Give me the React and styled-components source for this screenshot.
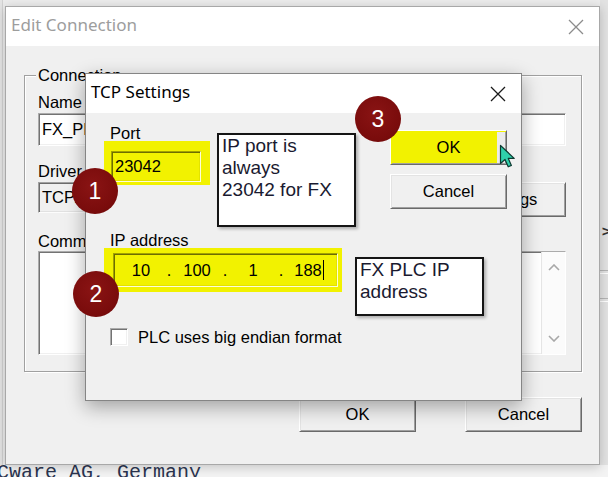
import React from "react";
import styled, { createGlobalStyle } from "styled-components";

const GlobalStyle = createGlobalStyle`
    html, body {
        margin: 0;
        padding: 0;
    }
    body {
        width: 608px;
        height: 477px;
        overflow: hidden;
        background: #ececec;
        font-family: "Liberation Sans", Arial, sans-serif;
    }
`

const Desktop = styled.div`
    position: relative;
    width: 608px;
    height: 477px;
    overflow: hidden;
`

/* ---------- the application behind the dialogs ---------- */

const BackApp = styled.div`
    display: flex;
    flex-direction: column;
    height: 100%;
    background: #ececec;
`

const BackTop = styled.div`
    flex: 1;
    display: grid;
    grid-template-columns: 5px 1fr 8px;
`

const BackLeft = styled.div`
    border-right: 1px solid #d2d2d2;
    margin-right: 2px;
    background: #e4e4e4;
`

const BackSide = styled.div`
    display: flex;
    flex-direction: column;
    padding-top: 222px;
    background: #e2e2e2;
`

const BackArrow = styled.div`
    font-family: "DejaVu Sans", sans-serif;
    font-size: 14px;
    font-weight: bold;
    line-height: 18px;
    color: #333;
    padding-left: 1px;
`

const BackRule = styled.div`
    height: 2px;
    margin-top: ${p => p.$gap}px;
    border-top: 1px solid #b4b4b4;
    border-bottom: 1px solid #fff;
`

const BackFooter = styled.div`
    height: 12px;
    overflow: hidden;
    background: #f3f3f3;
    font-family: "Liberation Mono", "Courier New", monospace;
    font-size: 20px;
    line-height: 15px;
    color: #2b3550;
    white-space: pre;
    text-indent: -3px;
`

/* ---------- generic window parts ---------- */

const Window = styled.div`
    position: absolute;
    left: ${p => p.$x}px;
    top: ${p => p.$y}px;
    width: ${p => p.$w}px;
    height: ${p => p.$h}px;
    box-sizing: border-box;
    display: flex;
    flex-direction: column;
    background: #f0f0f0;
    border: 1px solid ${p => (p.$active ? "#858585" : "#a8a8a8")};
    box-shadow: ${p => (p.$active
        ? "0 6px 18px rgba(0, 0, 0, 0.33)"
        : "0 2px 10px rgba(0, 0, 0, 0.2)")};
`

const TitleBar = styled.div`
    flex: none;
    height: 39px;
    display: flex;
    align-items: center;
    background: #fff;
`

const TitleText = styled.div`
    flex: 1;
    padding: 0 0 4px 5px;
    font-family: "Noto Sans", "Open Sans", sans-serif;
    font-size: 17px;
    color: ${p => (p.$active ? "#000" : "#9d9d9d")};
`

const CloseButton = styled.div`
    width: 46px;
    height: 100%;
    display: flex;
    align-items: center;
    justify-content: center;
`

const CloseIcon = ({ color }) => (
    <svg width="16" height="16" viewBox="0 0 16 16">
        <path d="M1 1 L15 15 M15 1 L1 15" stroke={color} strokeWidth="1.3" fill="none"/>
    </svg>
)

const FieldLabel = styled.div`
    height: 15px;
    line-height: 15px;
    font-size: 16.5px;
    color: #000;
    padding-left: ${p => p.$indent || 0}px;
    margin-top: ${p => p.$mt || 0}px;
    white-space: nowrap;
`

const Sunken = styled.div`
    box-sizing: border-box;
    width: ${p => (p.$w ? `${p.$w}px` : "auto")};
    height: ${p => p.$h}px;
    margin-top: ${p => p.$mt || 0}px;
    flex: ${p => (p.$grow ? 1 : "none")};
    display: flex;
    align-items: center;
    padding-left: 3px;
    background: ${p => p.$bg || "transparent"};
    border: 1px solid;
    border-color: rgba(0, 0, 0, 0.33) rgba(255, 255, 255, 0.85) rgba(255, 255, 255, 0.85) rgba(0, 0, 0, 0.33);
    box-shadow: inset 1px 1px 0 rgba(0, 0, 0, 0.55), inset -1px -1px 0 rgba(0, 0, 0, 0.06);
    font-size: 16.5px;
    color: #000;
    white-space: nowrap;
    overflow: hidden;
`

const Button = styled.div`
    box-sizing: border-box;
    width: 117px;
    height: 35px;
    flex: none;
    display: flex;
    align-items: center;
    justify-content: center;
    background: ${p => (p.$marked
        ? "linear-gradient(90deg, #f2f200 0 92%, #ebebeb 92%)"
        : "#f0f0f0")};
    border: 1px solid;
    border-color: #fff #6a6a6a #6a6a6a #fff;
    box-shadow: inset 1px 1px 0 ${p => (p.$marked ? "#f2f200" : "#e3e3e3")}, inset -1px -1px 0 #a0a0a0;
    font-size: 16.5px;
    color: #000;
`

/* ---------- Edit Connection ---------- */

const EditBody = styled.div`
    flex: 1;
    display: flex;
    flex-direction: column;
    padding: 29px 17px 0 18px;
`

const GroupBox = styled.div`
    height: 297px;
    box-sizing: border-box;
    display: flex;
    flex-direction: column;
    padding: 0 15px 16px 13px;
    border: 1px solid #a0a0a0;
    box-shadow: inset 1px 1px 0 #fff, 1px 1px 0 #fff;
`

const GroupLabel = styled.div`
    align-self: flex-start;
    margin: -10px 0 0 -2px;
    padding: 0 2px;
    height: 19px;
    line-height: 19px;
    font-size: 16.5px;
    background: #f0f0f0;
`

const DriverRow = styled.div`
    display: flex;
    align-items: flex-start;
    gap: 14px;
    margin-top: 3px;
`

const CommentBox = styled(Sunken)`
    align-items: stretch;
    padding-left: 0;
    justify-content: flex-end;
`

const ScrollBar = styled.div`
    width: 23px;
    display: flex;
    flex-direction: column;
    justify-content: space-between;
    align-items: center;
    padding: 12px 0;
    border-left: 1px solid #e6e6e6;
    background: #fbfbfb;
`

const Chevron = ({ down }) => (
    <svg width="12" height="7" viewBox="0 0 12 7">
        <path d={down ? "M1 1 L6 6 L11 1" : "M1 6 L6 1 L11 6"} stroke="#a8a8a8" strokeWidth="1.6" fill="none"/>
    </svg>
)

const DialogFooter = styled.div`
    display: flex;
    justify-content: flex-end;
    gap: 49px;
    padding-top: 25px;
`

/* ---------- TCP Settings ---------- */

const TcpBody = styled.div`
    flex: 1;
    display: flex;
    flex-direction: column;
    padding-left: 18px;
`

const SettingsRow = styled.div`
    display: flex;
    align-items: flex-start;
    height: ${p => p.$h}px;
    margin-top: ${p => p.$mt || 0}px;
`

const FieldGroup = styled.div`
    width: ${p => p.$w}px;
    margin-top: ${p => p.$mt || 0}px;
    display: flex;
    flex-direction: column;
`

const Highlight = styled.div`
    box-sizing: border-box;
    height: 44px;
    padding: ${p => p.$pad};
    background: #f2f200;
`

const Note = styled.div`
    box-sizing: border-box;
    width: ${p => p.$w}px;
    height: ${p => p.$h}px;
    margin: ${p => p.$mt}px 0 0 ${p => p.$ml}px;
    padding: 0 3px;
    background: #fff;
    border: 2px solid #151515;
    box-shadow: 2px 2px 3px rgba(0, 0, 0, 0.28);
    font-size: 19px;
    line-height: 22px;
    color: #1a1a30;
`

const ButtonColumn = styled.div`
    display: flex;
    flex-direction: column;
    gap: 9px;
    margin: 17px 0 0 34px;
`

const IpField = styled(Sunken)`
    padding-left: 6px;
`

const IpPart = styled.span`
    width: 42px;
    text-align: center;
`

const IpDot = styled.span`
    width: 14px;
    text-align: center;
`

const Caret = styled.span`
    display: inline-block;
    width: 1px;
    height: 20px;
    margin-left: 1px;
    vertical-align: -4px;
    background: #000;
`

const CheckRow = styled.div`
    display: flex;
    align-items: center;
    gap: 10px;
    margin: 12px 0 0 6px;
    height: 18px;
    font-size: 16.5px;
`

const CheckBox = styled(Sunken)`
    width: 18px;
    height: 18px;
    background: #fff;
`

/* ---------- annotations ---------- */

const Badge = styled.div`
    position: absolute;
    left: ${p => p.$cx - 23}px;
    top: ${p => p.$cy - 23}px;
    width: 46px;
    height: 46px;
    border-radius: 50%;
    display: flex;
    align-items: center;
    justify-content: center;
    background: radial-gradient(circle at 45% 40%, #8a1414 0%, #7a0c0c 65%, #6a0707 100%);
    color: #fff;
    font-size: 23px;
`

const Pointer = styled.svg`
    position: absolute;
    left: 499px;
    top: 144px;
`

const App = () => (
    <Desktop>
        <GlobalStyle/>
        <BackApp>
            <BackTop>
                <BackLeft/>
                <div/>
                <BackSide>
                    <BackArrow>&gt;</BackArrow>
                    <BackRule $gap={30}/>
                    <BackRule $gap={24}/>
                </BackSide>
            </BackTop>
            <BackFooter>Cware AG, Germany</BackFooter>
        </BackApp>

        <Window $x={5} $y={6} $w={595} $h={459}>
            <TitleBar>
                <TitleText>Edit Connection</TitleText>
                <CloseButton><CloseIcon color="#8c8c8c"/></CloseButton>
            </TitleBar>
            <EditBody>
                <GroupBox>
                    <GroupLabel>Connection</GroupLabel>
                    <FieldLabel $mt={10}>Name</FieldLabel>
                    <Sunken $h={33} $mt={3} $bg="#fff">FX_PLC</Sunken>
                    <FieldLabel $mt={18}>Driver</FieldLabel>
                    <DriverRow>
                        <Sunken $h={31} $grow>TCP/IP</Sunken>
                        <Button>Settings</Button>
                    </DriverRow>
                    <FieldLabel $mt={17}>Comment</FieldLabel>
                    <CommentBox $h={104} $mt={2} $bg="#fff">
                        <ScrollBar>
                            <Chevron/>
                            <Chevron down/>
                        </ScrollBar>
                    </CommentBox>
                </GroupBox>
                <DialogFooter>
                    <Button>OK</Button>
                    <Button>Cancel</Button>
                </DialogFooter>
            </EditBody>
        </Window>

        <Window $x={85} $y={73} $w={437} $h={328} $active>
            <TitleBar>
                <TitleText $active>TCP Settings</TitleText>
                <CloseButton><CloseIcon color="#1a1a1a"/></CloseButton>
            </TitleBar>
            <TcpBody>
                <SettingsRow $h={114}>
                    <FieldGroup $w={106} $mt={13}>
                        <FieldLabel $indent={6}>Port</FieldLabel>
                        <Highlight $pad="10px 0 0 7px">
                            <Sunken $w={90} $h={31}>23042</Sunken>
                        </Highlight>
                    </FieldGroup>
                    <Note $w={139} $h={94} $mt={20} $ml={7}>
                        IP port is<br/>always<br/>23042 for FX
                    </Note>
                    <ButtonColumn>
                        <Button $marked>OK</Button>
                        <Button>Cancel</Button>
                    </ButtonColumn>
                </SettingsRow>
                <SettingsRow $h={83} $mt={6}>
                    <FieldGroup $w={238}>
                        <FieldLabel $indent={6}>IP address</FieldLabel>
                        <Highlight $pad="5px 0 0 9px">
                            <IpField $w={225} $h={34}>
                                <IpPart>10</IpPart>
                                <IpDot>.</IpDot>
                                <IpPart>100</IpPart>
                                <IpDot>.</IpDot>
                                <IpPart>1</IpPart>
                                <IpDot>.</IpDot>
                                <IpPart>188<Caret/></IpPart>
                            </IpField>
                        </Highlight>
                    </FieldGroup>
                    <Note $w={129} $h={59} $mt={24} $ml={13}>
                        FX PLC IP<br/>address
                    </Note>
                </SettingsRow>
                <CheckRow>
                    <CheckBox/>
                    PLC uses big endian format
                </CheckRow>
            </TcpBody>
        </Window>

        <Badge $cx={95} $cy={191}>1</Badge>
        <Badge $cx={96} $cy={294}>2</Badge>
        <Badge $cx={378} $cy={119}>3</Badge>

        <Pointer width="20" height="25" viewBox="0 0 20 25">
            <path d="M1.5 1.5 L1.5 19.5 L6 15.5 L9.2 22.8 L12.4 21.4 L9.3 14.4 L15.2 14.4 Z"
                  fill="#2fd0ab" stroke="#0d3a31" strokeWidth="1.2" strokeLinejoin="round"/>
        </Pointer>
    </Desktop>
)

export default App
